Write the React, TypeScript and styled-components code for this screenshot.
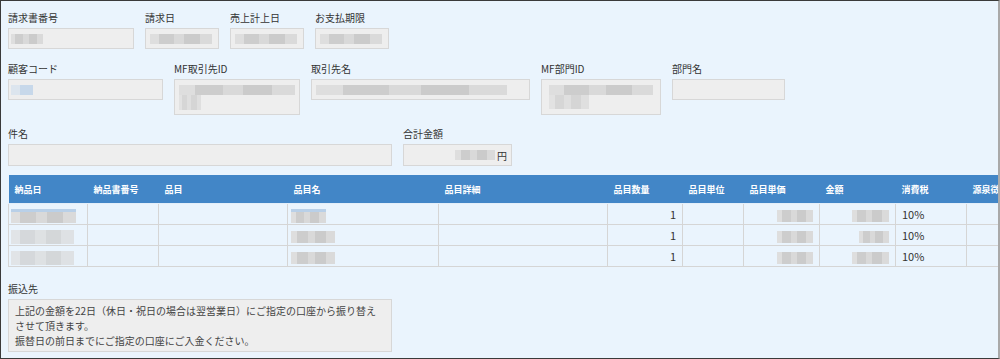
import React from "react";
import styled, { createGlobalStyle } from "styled-components";

const Global = createGlobalStyle`
  html, body { margin: 0; padding: 0; overflow: hidden; }
  body { font-family: "Noto Sans CJK JP", "Noto Sans", sans-serif; }
`;

const Frame = styled.div`
  box-sizing: border-box;
  width: 1000px;
  height: 359px;
  border: 1px solid #3a3a3a;
  border-right: 2px solid #a9a9a9;
  background: #eaf4fd;
  overflow: hidden;
  padding: 7px 0 0 7px;
`;

const Row = styled.div<{ $mt?: number }>`
  display: flex;
  align-items: flex-start;
  gap: 11px;
  margin-top: ${(p) => p.$mt ?? 0}px;
`;

const Field = styled.div<{ $w: number }>`
  display: flex;
  flex-direction: column;
  width: ${(p) => p.$w}px;
`;

const Label = styled.div`
  height: 20px;
  line-height: 20px;
  font-size: 10px;
  color: #333;
  white-space: nowrap;
`;

const Box = styled.div<{ $h?: number; $tall?: boolean; $right?: boolean }>`
  box-sizing: border-box;
  height: ${(p) => p.$h ?? 21}px;
  border: 1px solid #d7d7d7;
  background: #eeeeee;
  padding: ${(p) => (p.$tall ? "5px 4px 0" : "0 4px")};
  display: flex;
  flex-direction: ${(p) => (p.$tall ? "column" : "row")};
  align-items: ${(p) => (p.$tall ? "flex-start" : "center")};
  justify-content: ${(p) => (p.$right ? "flex-end" : "flex-start")};
  font-size: 10px;
  color: #333;
`;

const grayPix =
  "linear-gradient(90deg, #dedede 0 14%, #cdcdcd 14% 38%, #d9d9d9 38% 55%, #cbcbcb 55% 80%, #dadada 80%)";
const bluePix =
  "linear-gradient(90deg, #dce5ee 0 40%, #c7d8ea 40% 100%)";

const Blur = styled.span<{ $w: number; $h?: number; $tint?: boolean; $light?: boolean; $ml?: number }>`
  display: inline-block;
  vertical-align: middle;
  width: ${(p) => p.$w}px;
  height: ${(p) => p.$h ?? 10}px;
  margin-left: ${(p) => p.$ml ?? 0}px;
  background: ${(p) => (p.$tint ? bluePix : grayPix)};
  opacity: ${(p) => (p.$light ? 0.7 : 1)};
  filter: blur(0.5px);
`;

const LinkBlur = styled.span<{ $w: number; $ml?: number }>`
  display: inline-block;
  vertical-align: middle;
  width: ${(p) => p.$w}px;
  height: 14px;
  margin-left: ${(p) => p.$ml ?? 0}px;
  background: linear-gradient(180deg, #b9d0e8 0 3px, transparent 3px), ${grayPix};
  filter: blur(0.5px);
`;

const Yen = styled.span`
  margin-left: 2px;
  font-size: 10px;
  color: #333;
`;

const Table = styled.table`
  margin-top: 9px;
  border-collapse: collapse;
  table-layout: fixed;
  width: 1030px;
`;

const Th = styled.th`
  height: 28px;
  background: #4286c7;
  color: #fff;
  font-size: 9px;
  font-weight: bold;
  text-align: left;
  padding: 0 6px;
  white-space: nowrap;
  overflow: hidden;
  border-bottom: 1px solid #e3eef9;
`;

const Tr = styled.tr`
  height: 21px;
`;

const Td = styled.td<{ $align?: "left" | "right" }>`
  box-sizing: border-box;
  border: 1px solid #d5d5d5;
  padding: 0 6px;
  font-size: 11px;
  color: #333;
  text-align: ${(p) => p.$align ?? "left"};
  background: #eaf4fd;
  white-space: nowrap;
  overflow: hidden;
`;

const Note = styled.div`
  box-sizing: border-box;
  width: 384px;
  border: 1px solid #d7d7d7;
  background: #eeeeee;
  padding: 3px 6px;
  font-size: 10px;
  line-height: 15px;
  color: #444;
`;

const Section = styled.div<{ $mt: number }>`
  margin-top: ${(p) => p.$mt}px;
`;

const cols = [79, 71, 129, 151, 169, 75, 61, 76, 76, 71, 72];
const heads = [
  "納品日",
  "納品書番号",
  "品目",
  "品目名",
  "品目詳細",
  "品目数量",
  "品目単位",
  "品目単価",
  "金額",
  "消費税",
  "源泉徴収",
];

const rows = [
  { name: 44, nameTint: true, price: 36, amount: 37 },
  { name: 44, nameTint: false, price: 36, amount: 30 },
  { name: 44, nameTint: false, price: 36, amount: 37 },
];

export default function App() {
  return (
    <>
      <Global />
      <Frame>
        <Row>
          <Field $w={126}>
            <Label>請求書番号</Label>
            <Box>
              <Blur $w={32} $ml={-2} />
            </Box>
          </Field>
          <Field $w={74}>
            <Label>請求日</Label>
            <Box>
              <Blur $w={62} />
            </Box>
          </Field>
          <Field $w={74}>
            <Label>売上計上日</Label>
            <Box>
              <Blur $w={62} />
            </Box>
          </Field>
          <Field $w={74}>
            <Label>お支払期限</Label>
            <Box>
              <Blur $w={62} />
            </Box>
          </Field>
        </Row>

        <Row $mt={10}>
          <Field $w={155}>
            <Label>顧客コード</Label>
            <Box>
              <Blur $w={22} $tint $ml={-2} />
            </Box>
          </Field>
          <Field $w={126}>
            <Label>MF取引先ID</Label>
            <Box $h={36} $tall>
              <Blur $w={116} />
              <Blur $w={22} $h={15} $light />
            </Box>
          </Field>
          <Field $w={219}>
            <Label>取引先名</Label>
            <Box>
              <Blur $w={191} />
            </Box>
          </Field>
          <Field $w={120}>
            <Label>MF部門ID</Label>
            <Box $h={36} $tall>
              <Blur $w={104} $ml={3} />
              <Blur $w={40} $h={14} $ml={3} $light />
            </Box>
          </Field>
          <Field $w={113}>
            <Label>部門名</Label>
            <Box />
          </Field>
        </Row>

        <Row $mt={9}>
          <Field $w={384}>
            <Label>件名</Label>
            <Box $h={22} />
          </Field>
          <Field $w={109}>
            <Label>合計金額</Label>
            <Box $h={22} $right>
              <Blur $w={40} />
              <Yen>円</Yen>
            </Box>
          </Field>
        </Row>

        <Table>
          <colgroup>
            {cols.map((w, i) => (
              <col key={i} style={{ width: w }} />
            ))}
          </colgroup>
          <thead>
            <tr>
              {heads.map((h) => (
                <Th key={h}>{h}</Th>
              ))}
            </tr>
          </thead>
          <tbody>
            {rows.map((r, i) => (
              <Tr key={i}>
                <Td>
                  {i === 0 ? <LinkBlur $w={65} $ml={-4} /> : <Blur $w={63} $h={14} $ml={-4} $light />}
                </Td>
                <Td />
                <Td />
                <Td>
                  {r.nameTint ? <LinkBlur $w={35} $ml={-3} /> : <Blur $w={r.name} $h={12} $ml={-3} />}
                </Td>
                <Td />
                <Td $align="right">1</Td>
                <Td />
                <Td $align="right">
                  <Blur $w={r.price} $h={12} $ml={0} />
                </Td>
                <Td $align="right">
                  <Blur $w={r.amount} $h={12} />
                </Td>
                <Td>10%</Td>
                <Td />
              </Tr>
            ))}
          </tbody>
        </Table>

        <Section $mt={12}>
          <Label>振込先</Label>
          <Note>
            上記の金額を22日（休日・祝日の場合は翌営業日）にご指定の口座から振り替えさせて頂きます。
            <br />
            振替日の前日までにご指定の口座にご入金ください。
          </Note>
        </Section>
      </Frame>
    </>
  );
}
